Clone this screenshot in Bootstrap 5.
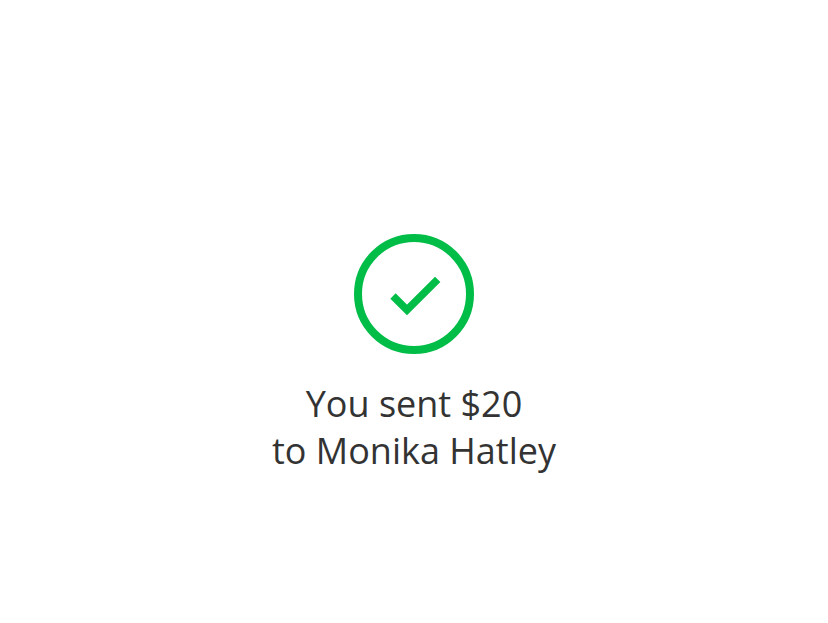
<!DOCTYPE html>
<html lang="en">
<head>
<meta charset="utf-8">
<meta name="viewport" content="width=device-width, initial-scale=1">
<title>Payment sent</title>
<link rel="stylesheet" href="https://cdn.jsdelivr.net/npm/bootstrap@5.3.0/dist/css/bootstrap.min.css">
<style>
body { font-family: "Open Sans", "Noto Sans", sans-serif; color: #333; background: #fff; }
.confirmation { padding-top: 84px; }
.status-icon { width: 120px; height: 120px; margin-bottom: 26px; }
.status-text { font-size: 36px; line-height: 47px; font-weight: 400; }
</style>
</head>
<body>
<main class="confirmation min-vh-100 d-flex flex-column align-items-center justify-content-center text-center">
  <svg class="status-icon" viewBox="0 0 120 120" fill="none" stroke="#00bd48" role="img" aria-label="Success">
    <circle cx="60" cy="60" r="56" stroke-width="8"/>
    <path d="M39 62 53 76 83.7 45.3" stroke-width="7.5"/>
  </svg>
  <h1 class="status-text mb-0">You sent $20<br>to Monika Hatley</h1>
</main>
<script src="https://cdn.jsdelivr.net/npm/bootstrap@5.3.0/dist/js/bootstrap.bundle.min.js"></script>
</body>
</html>
